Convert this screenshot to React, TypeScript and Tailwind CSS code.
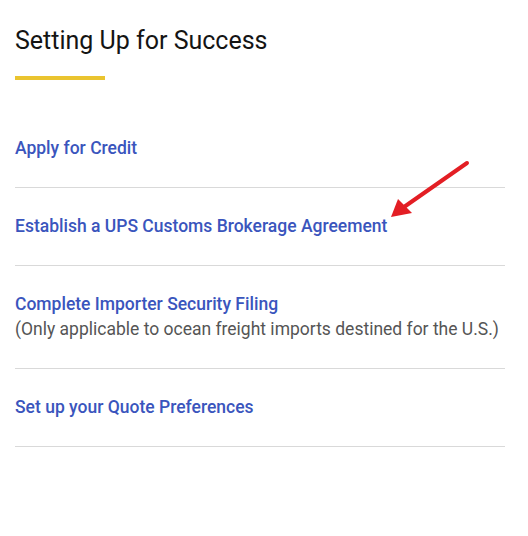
const items = [
  { title: "Apply for Credit" },
  { title: "Establish a UPS Customs Brokerage Agreement" },
  {
    title: "Complete Importer Security Filing",
    note: "(Only applicable to ocean freight imports destined for the U.S.)",
  },
  { title: "Set up your Quote Preferences" },
];

function Arrow() {
  return (
    <svg
      className="absolute left-[386px] top-[156px]"
      width="90"
      height="66"
      viewBox="386 156 90 66"
    >
      <line
        x1="467"
        y1="163"
        x2="404"
        y2="207"
        stroke="#e31e24"
        strokeWidth="4"
        strokeLinecap="round"
      />
      <polygon points="391,217 398,199 412,213" fill="#e31e24" />
    </svg>
  );
}

export default function App() {
  return (
    <div
      className="relative h-[536px] w-[528px] bg-white px-[15px] pt-[28px]"
      style={{ fontFamily: "Roboto, 'Liberation Sans', sans-serif" }}
    >
      <h1 className="text-[25px] leading-[25px] font-normal text-[#141414]">
        Setting Up for Success
      </h1>
      <div className="mt-[23px] h-[4px] w-[90px] bg-[#eac42f]" />
      <ul className="mt-[30px] w-[490px]">
        {items.map((item) => (
          <li
            key={item.title}
            className="border-b border-[#d9d9d9] py-[26px] text-[17.5px] leading-[25px]"
          >
            <a href="#" className="font-medium text-[#3a55bd]">
              {item.title}
            </a>
            {item.note ? (
              <p className="whitespace-nowrap text-[#555555]">{item.note}</p>
            ) : null}
          </li>
        ))}
      </ul>
      <Arrow />
    </div>
  );
}
